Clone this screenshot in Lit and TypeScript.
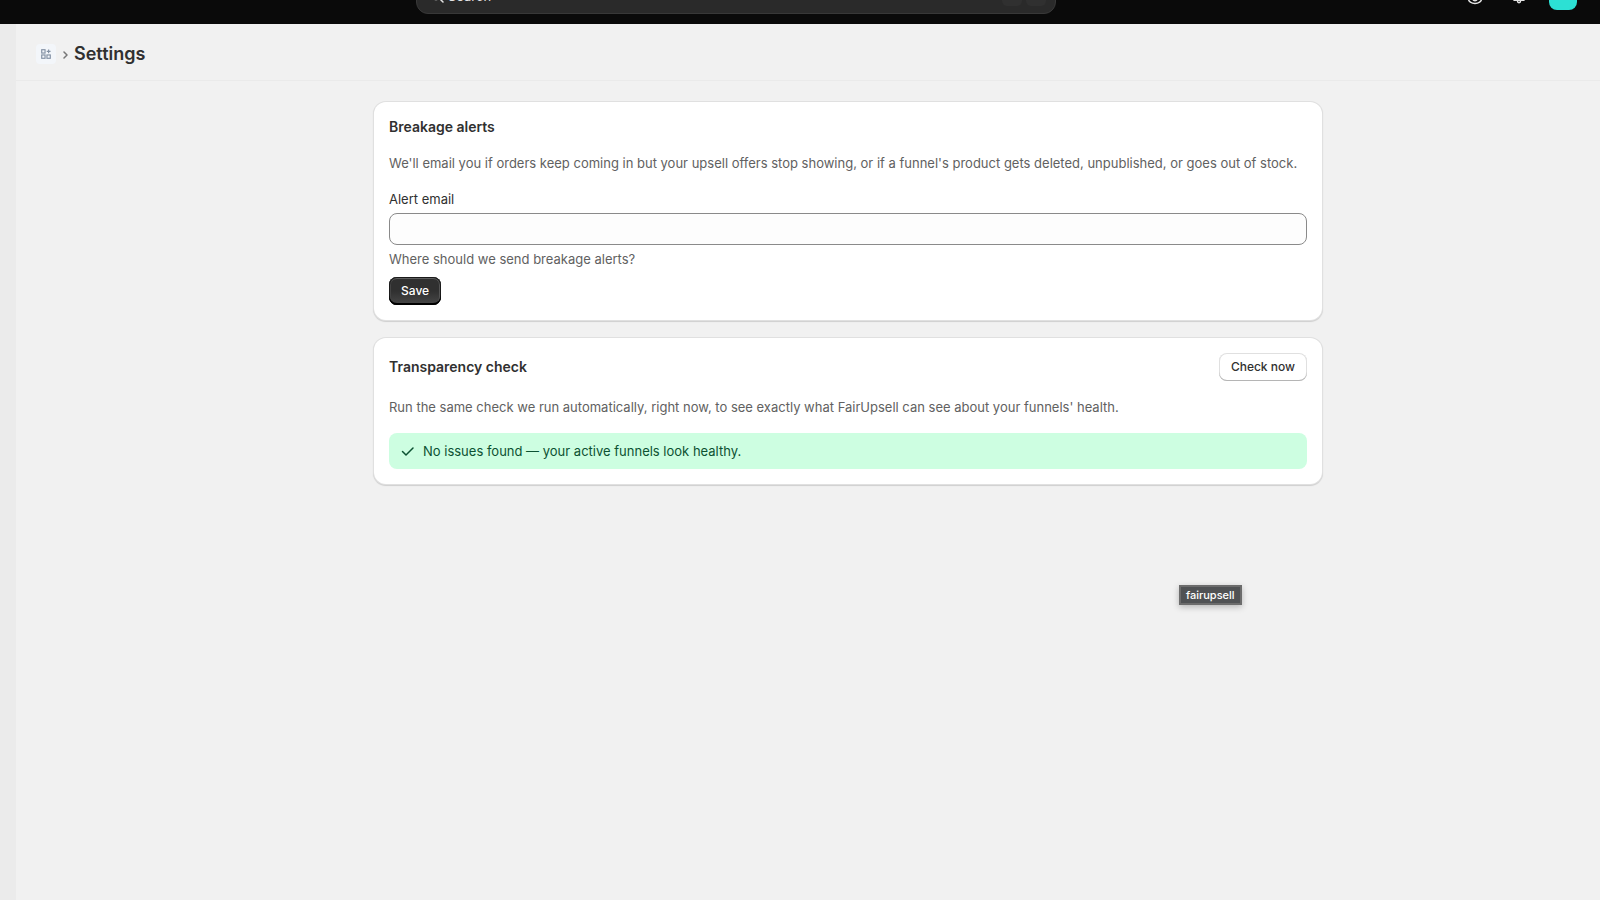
import { LitElement, html, css, svg } from "lit";
import { customElement, state } from "lit/decorators.js";

const apps = svg`
  <rect x="0.75" y="0.75" width="3.5" height="3.5" />
  <rect x="0.75" y="6.25" width="3.5" height="3.5" />
  <rect x="6.25" y="6.25" width="3.5" height="3.5" />
  <path d="M8 0.5v4M6 2.5h4" />
`;

@customElement("app-root")
export class AppRoot extends LitElement {
  @state() private email = "";

  static styles = css`
    :host {
      display: flex;
      flex-direction: column;
      min-height: 100vh;
      background: #f1f1f1;
      color: #303030;
      font: 400 13px/20px Inter, "Liberation Sans", sans-serif;
    }
    * {
      box-sizing: border-box;
    }
    h1,
    h2,
    p {
      margin: 0;
    }
    button,
    input {
      font: inherit;
      color: inherit;
    }
    .topbar {
      display: flex;
      align-items: flex-end;
      height: 24px;
      overflow: hidden;
      background: #0a0a0a;
      color: #e3e3e3;
    }
    .bar {
      flex: 1;
      display: grid;
      grid-template-columns: 26% 40% 1fr;
      align-items: center;
      height: 56px;
    }
    .search {
      grid-column: 2;
      display: flex;
      align-items: center;
      gap: 4px;
      height: 36px;
      padding: 0 9px 0 12px;
      border: 1px solid #383838;
      border-radius: 12px;
      background: #2a2a2a;
      text-align: left;
      color: #e3e3e3;
    }
    .search span {
      flex: 1;
    }
    .search svg {
      margin-left: 1px;
    }
    .search kbd {
      width: 20px;
      height: 20px;
      border-radius: 5px;
      background: #303030;
    }
    .tools {
      display: flex;
      justify-content: flex-end;
      align-items: center;
      gap: 24px;
      padding-right: 23px;
    }
    .tools button {
      display: flex;
      padding: 0;
      border: 0;
      background: none;
    }
    .tools .avatar {
      width: 28px;
      height: 28px;
      margin-left: -4px;
      border-radius: 8px;
      background: #2ce0d4;
    }
    svg {
      display: block;
      fill: none;
      stroke: currentColor;
      stroke-width: 1.5;
      stroke-linecap: round;
      stroke-linejoin: round;
    }
    .body {
      flex: 1;
      display: grid;
      grid-template-columns: 16px 1fr;
    }
    .rail {
      background: #ebebeb;
    }
    .heading {
      display: flex;
      align-items: center;
      height: 57px;
      padding: 4px 20px 0;
      border-bottom: 1px solid #eaeaea;
    }
    .app-link {
      display: flex;
      align-items: center;
      justify-content: center;
      width: 20px;
      height: 20px;
      border-radius: 4px;
      background: #f3f6fa;
      color: #8290a3;
    }
    .app-link svg {
      stroke-width: 1.2;
      stroke-linecap: butt;
      stroke-linejoin: miter;
    }
    .chevron {
      margin: 1px 6px 0 7px;
      color: #777;
    }
    h1 {
      font-size: 18px;
      line-height: 24px;
      font-weight: 600;
    }
    .page {
      display: grid;
      gap: 18px;
      max-width: 1028px;
      margin: 0 auto;
      padding: 21px 0 24px 80px;
    }
    .card {
      padding: 15px;
      border-radius: 12px;
      background: #fff;
      box-shadow: 0 0 0 1px #e0e0e0, 0 1px 1px 1px #cfcfcf;
    }
    h2 {
      font-size: 14px;
      line-height: 20px;
      font-weight: 600;
    }
    .muted {
      color: #616161;
    }
    form {
      display: grid;
      justify-items: start;
    }
    form .muted {
      margin: 16px 0;
    }
    .field {
      display: block;
      width: 100%;
      height: 32px;
      margin: 4px 0;
      padding: 0 12px;
      border: 1px solid #8a8a8a;
      border-radius: 8px;
      background: #fdfdfd;
    }
    form .help {
      margin: 0 0 8px;
    }
    .btn {
      height: 28px;
      padding: 0 12px;
      border: 0;
      border-radius: 8px;
      font-size: 12px;
      line-height: 16px;
      font-weight: 500;
    }
    .primary {
      background: linear-gradient(#303030 50%, #484848);
      color: #fff;
      box-shadow: inset 0 -2px 0 #000, inset 0 0 0 1px #1a1a1a, inset 0 2px 0 #5e5e5e,
        inset 2px 0 0 #444, inset -2px 0 0 #555;
    }
    .secondary {
      background: #fff;
      box-shadow: inset 0 -1px 0 #b5b5b5, inset 0 0 0 1px #e0e0e0;
    }
    .row {
      display: flex;
      justify-content: space-between;
      align-items: center;
      margin-bottom: 16px;
    }
    .banner {
      display: flex;
      align-items: center;
      gap: 8px;
      margin-top: 16px;
      padding: 8px 12px;
      border-radius: 8px;
      background: #cdfee1;
      color: #0c5132;
    }
    .tip {
      position: absolute;
      left: 1179px;
      top: 585px;
      padding: 1px 5px;
      border: 2px solid #6c6c6c;
      background: #505254;
      color: #fff;
      font-size: 11px;
      line-height: 14px;
      font-weight: 500;
      box-shadow: 0 2px 6px rgb(0 0 0 / 25%);
    }
  `;

  private save(e: Event) {
    e.preventDefault();
  }

  render() {
    return html`
      <header class="topbar">
        <div class="bar">
          <button class="search" type="button">
            <svg width="14" height="14" viewBox="0 0 14 14">
              <circle cx="6" cy="6" r="4.5" />
              <path d="M9.5 9.5L13 13" />
            </svg>
            <span>Search</span>
            <kbd></kbd><kbd></kbd>
          </button>
          <div class="tools">
            <button type="button" aria-label="Preview">
              <svg width="20" height="20" viewBox="0 0 20 20">
                <ellipse cx="10" cy="13" rx="6.5" ry="4.5" />
                <circle cx="10" cy="12.5" r="2.2" />
              </svg>
            </button>
            <button type="button" aria-label="Notifications">
              <svg width="20" height="20" viewBox="0 0 20 20">
                <path d="M5 14.2h10l-1.5-4V7a3.5 3.5 0 0 0-7 0v3.2z" />
                <path d="M8.5 14.5v0.5a1.5 1.7 0 0 0 3 0v-0.5" />
              </svg>
            </button>
            <button class="avatar" type="button" aria-label="Account"></button>
          </div>
        </div>
      </header>
      <div class="body">
        <div class="rail"></div>
        <main>
          <div class="heading">
            <a class="app-link" href="#" aria-label="App home">
              <svg width="10" height="10" viewBox="0 0 10.5 10.5">${apps}</svg>
            </a>
            <svg class="chevron" width="5" height="8" viewBox="0 0 5 8">
              <path d="M1 1l3 3-3 3" />
            </svg>
            <h1>Settings</h1>
          </div>
          <div class="page">
            <section class="card">
              <form @submit=${this.save}>
                <h2>Breakage alerts</h2>
                <p class="muted">
                  We'll email you if orders keep coming in but your upsell offers stop showing, or
                  if a funnel's product gets deleted, unpublished, or goes out of stock.
                </p>
                <label for="email">Alert email</label>
                <input
                  id="email"
                  class="field"
                  type="email"
                  aria-describedby="help"
                  .value=${this.email}
                  @input=${(e: Event) => (this.email = (e.target as HTMLInputElement).value)}
                />
                <p id="help" class="muted help">Where should we send breakage alerts?</p>
                <button class="btn primary" type="submit">Save</button>
              </form>
            </section>
            <section class="card">
              <div class="row">
                <h2>Transparency check</h2>
                <button class="btn secondary" type="button">Check now</button>
              </div>
              <p class="muted">
                Run the same check we run automatically, right now, to see exactly what FairUpsell
                can see about your funnels' health.
              </p>
              <div class="banner" role="status">
                <svg width="14" height="14" viewBox="0 0 14 14">
                  <path d="M1.5 7.5l3.5 3.5 7-7" />
                </svg>
                No issues found — your active funnels look healthy.
              </div>
            </section>
          </div>
        </main>
      </div>
      <div class="tip" role="tooltip">fairupsell</div>
    `;
  }
}
